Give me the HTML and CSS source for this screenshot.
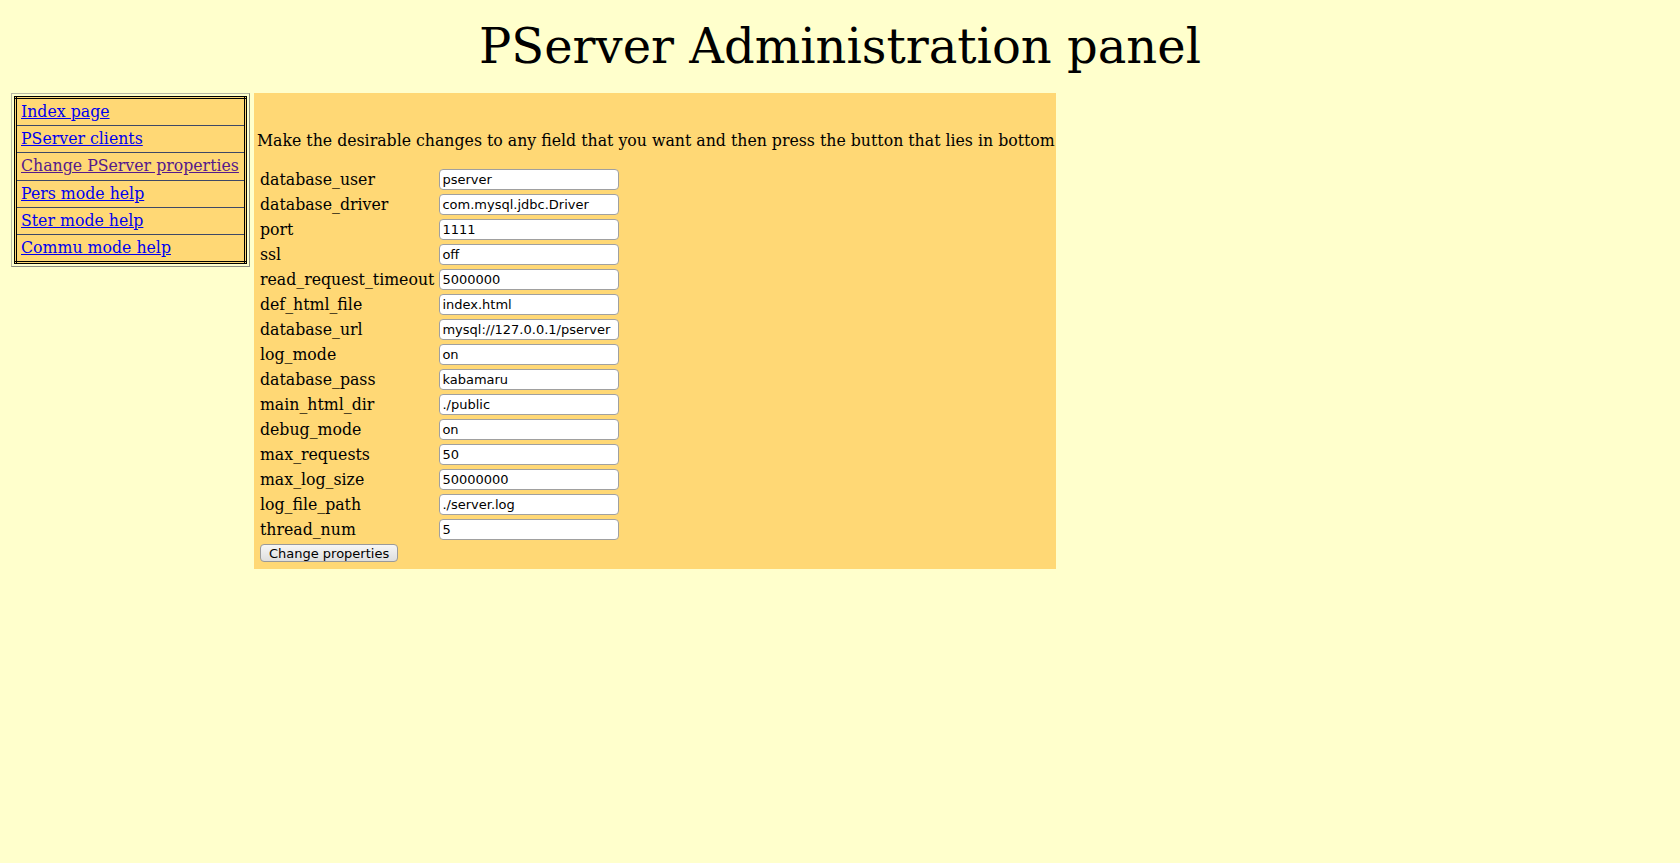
FILE: index.html
```html
<!DOCTYPE html>
<html>
<head>
<meta charset="utf-8">
<title>PServer Administration panel</title>
<link rel="stylesheet" href="styles.css">
</head>
<body>
<h1 class="title">PServer Administration panel</h1>
<div class="layout">
  <div class="menu-box">
    <table class="menu">
      <tr><td><a class="link" href="#">Index page</a></td></tr>
      <tr><td><a class="link" href="#">PServer clients</a></td></tr>
      <tr><td><a class="link visited" href="#">Change PServer properties</a></td></tr>
      <tr><td><a class="link" href="#">Pers mode help</a></td></tr>
      <tr><td><a class="link" href="#">Ster mode help</a></td></tr>
      <tr><td><a class="link" href="#">Commu mode help</a></td></tr>
    </table>
  </div>
  <div class="panel">
    <p class="intro">Make the desirable changes to any field that you want and then press the button that lies in bottom</p>
    <form class="props">
      <table class="fields">
        <tr><td class="lbl">database_user</td><td><input class="inp" type="text" value="pserver"></td></tr>
        <tr><td class="lbl">database_driver</td><td><input class="inp" type="text" value="com.mysql.jdbc.Driver"></td></tr>
        <tr><td class="lbl">port</td><td><input class="inp" type="text" value="1111"></td></tr>
        <tr><td class="lbl">ssl</td><td><input class="inp" type="text" value="off"></td></tr>
        <tr><td class="lbl">read_request_timeout</td><td><input class="inp" type="text" value="5000000"></td></tr>
        <tr><td class="lbl">def_html_file</td><td><input class="inp" type="text" value="index.html"></td></tr>
        <tr><td class="lbl">database_url</td><td><input class="inp" type="text" value="mysql://127.0.0.1/pserver"></td></tr>
        <tr><td class="lbl">log_mode</td><td><input class="inp" type="text" value="on"></td></tr>
        <tr><td class="lbl">database_pass</td><td><input class="inp" type="text" value="kabamaru"></td></tr>
        <tr><td class="lbl">main_html_dir</td><td><input class="inp" type="text" value="./public"></td></tr>
        <tr><td class="lbl">debug_mode</td><td><input class="inp" type="text" value="on"></td></tr>
        <tr><td class="lbl">max_requests</td><td><input class="inp" type="text" value="50"></td></tr>
        <tr><td class="lbl">max_log_size</td><td><input class="inp" type="text" value="50000000"></td></tr>
        <tr><td class="lbl">log_file_path</td><td><input class="inp" type="text" value="./server.log"></td></tr>
        <tr><td class="lbl">thread_num</td><td><input class="inp" type="text" value="5"></td></tr>
        <tr><td class="btn-cell" colspan="2"><button class="btn" type="button">Change properties</button></td></tr>
      </table>
    </form>
  </div>
</div>
</body>
</html>
```
FILE: styles.css
```css
html, body {
  margin: 0;
  padding: 0;
}
body {
  background: #ffffcc;
  font-family: "DejaVu Serif", serif;
  font-size: 15.75px;
  color: #000;
  padding: 8px;
}
.title {
  font-family: "DejaVu Serif", serif;
  font-weight: normal;
  font-size: 48px;
  line-height: 56px;
  text-align: center;
  margin: 10px 0 19px 0;
}
.layout {
  display: flex;
  align-items: flex-start;
  gap: 4px;
  padding-left: 3px;
}
.menu-box {
  border: 1px solid #b8b8a4;
  border-right-color: #8c8c80;
  border-bottom-color: #8c8c80;
  padding: 2px;
}
.menu {
  border: 3px double #000;
  border-collapse: collapse;
  background: #ffd875;
}
.menu td {
  padding: 3px 5px 4px 4px;
  border-bottom: 1px solid #3e4866;
  line-height: 19.2px;
  white-space: nowrap;
}
.menu tr:last-child td {
  border-bottom: none;
}
.link {
  color: #0000ee;
  text-decoration: underline;
}
.link.visited {
  color: #551a8b;
}
.panel {
  background: #ffd875;
  padding: 38px 1px 4px 3px;
}
.intro {
  margin: 0 0 17px 0;
  line-height: 19px;
  white-space: nowrap;
}
.props {
  margin: 0;
}
.fields {
  border-collapse: separate;
  border-spacing: 0;
}
.fields td {
  padding: 2px 2px 2px 3px;
  height: 21px;
}
.lbl {
  line-height: 19px;
  white-space: nowrap;
}
.inp {
  width: 180px;
  height: 21px;
  box-sizing: border-box;
  border: 1px solid #a0a0a0;
  border-radius: 4px;
  background: #fff;
  font-family: "DejaVu Sans", sans-serif;
  font-size: 13px;
  padding: 0 2px;
  margin: 0;
  color: #000;
  display: block;
}
.btn-cell {
  padding-top: 0 !important;
}
.btn {
  font-family: "DejaVu Sans", sans-serif;
  font-size: 13px;
  height: 18px;
  padding: 0 8px;
  border: 1px solid #9a9a9a;
  border-radius: 4px;
  background: linear-gradient(#f6f6f6, #dedede);
  color: #000;
  line-height: 15px;
}
```
